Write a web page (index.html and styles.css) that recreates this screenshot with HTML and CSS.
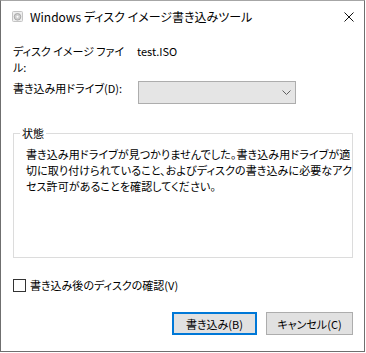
FILE: index.html
```html
<!DOCTYPE html>
<html lang="ja">
<head>
<meta charset="utf-8">
<link rel="stylesheet" href="styles.css">
</head>
<body>
<div class="window">
  <div class="titlebar">
    <svg class="app-icon" viewBox="0 0 11 11" width="11" height="11">
      <rect x="0.5" y="0.5" width="10" height="10" rx="1" fill="#eeeeee" stroke="#c4c4c4"/>
      <circle cx="5.5" cy="5.8" r="3.3" fill="#cfcfcf" stroke="#9a9a9a" stroke-width="0.8"/>
      <circle cx="5.5" cy="5.8" r="1" fill="#ffffff"/>
    </svg>
    <span class="title">Windows ディスク イメージ書き込みツール</span>
    <svg class="close" viewBox="0 0 10 10" width="10" height="10">
      <path d="M0.5 0.5 L9.5 9.5 M9.5 0.5 L0.5 9.5" stroke="#111" stroke-width="1" fill="none"/>
    </svg>
  </div>
  <div class="content">
    <div class="row file-row">
      <div class="label">ディスク イメージ ファイ<br>ル:</div>
      <div class="value">test.ISO</div>
    </div>
    <div class="row drive-row">
      <div class="label">書き込み用ドライブ(D):</div>
      <div class="combo">
        <svg class="chevron" viewBox="0 0 9 5" width="9" height="5">
          <path d="M0.5 0.5 L4.5 4.5 L8.5 0.5" stroke="#606060" stroke-width="1" fill="none"/>
        </svg>
      </div>
    </div>
    <fieldset class="status">
      <legend>状態</legend>
      <p class="message">書き込み用ドライブが見つかりませんでした。書き込み用ドライブが適<br>切に取り付けられていること、およびディスクの書き込みに必要なアク<br>セス許可があることを確認してください。</p>
    </fieldset>
    <label class="verify"><span class="checkbox"></span>書き込み後のディスクの確認(V)</label>
    <div class="buttons">
      <button class="btn primary">書き込み(B)</button>
      <button class="btn cancel">キャンセル(C)</button>
    </div>
  </div>
</div>
</body>
</html>
```

FILE: styles.css
```css
* { box-sizing: border-box; }
html, body { margin: 0; padding: 0; background: #fff; }
body {
  font-family: "Noto Sans CJK JP", sans-serif;
  font-size: 11px;
  color: #000;
  font-feature-settings: "palt";
}
.window {
  width: 365px;
  height: 352px;
  border: 1px solid #6f6f6f;
  border-top-color: #a6a6a6;
  display: flex;
  flex-direction: column;
  background: #fff;
}
.titlebar {
  height: 31px;
  display: flex;
  align-items: center;
  padding: 0 10px 0 11px;
}
.app-icon { flex: none; margin-right: 7px; }
.title { flex: 1; font-size: 12px; line-height: 16px; }
.close { flex: none; }
.content {
  padding: 11px 11px 0 12px;
  display: flex;
  flex-direction: column;
}
.row { display: flex; align-items: flex-start; line-height: 16px; }
.label { width: 124px; flex: none; }
.drive-row { margin-top: 5px; }
.combo {
  margin-top: 1px;
  margin-left: 1px;
  width: 158px;
  height: 23px;
  border: 1px solid #adadad;
  background: #e5e5e5;
  display: flex;
  align-items: center;
  justify-content: flex-end;
  padding-right: 4px;
}
.status {
  margin: 21px 0 0 0;
  padding: 0 12px 0 12px;
  border: 1px solid #dcdcdc;
  height: 133px;
  min-width: 0;
}
.status legend {
  padding: 0 2px;
  margin-left: -6px;
  line-height: 16px;
}
.message {
  margin: 5px 0 0 0;
  line-height: 16px;
  white-space: nowrap;
  letter-spacing: 0.1px;
}
.verify {
  margin-top: 19px;
  display: flex;
  align-items: center;
  line-height: 16px;
}
.checkbox {
  width: 13px;
  height: 13px;
  border: 1px solid #333;
  background: #fff;
  margin-right: 4px;
  flex: none;
}
.buttons {
  margin-top: 19px;
  display: flex;
  justify-content: flex-end;
  gap: 9px;
}
.btn {
  font-family: inherit;
  font-size: 11px;
  font-feature-settings: "palt";
  height: 23px;
  background: #e1e1e1;
  border: 1px solid #adadad;
  color: #000;
  padding: 0;
  line-height: 16px;
}
.primary { width: 85px; border: 2px solid #0078d7; }
.cancel { width: 87px; }
```
